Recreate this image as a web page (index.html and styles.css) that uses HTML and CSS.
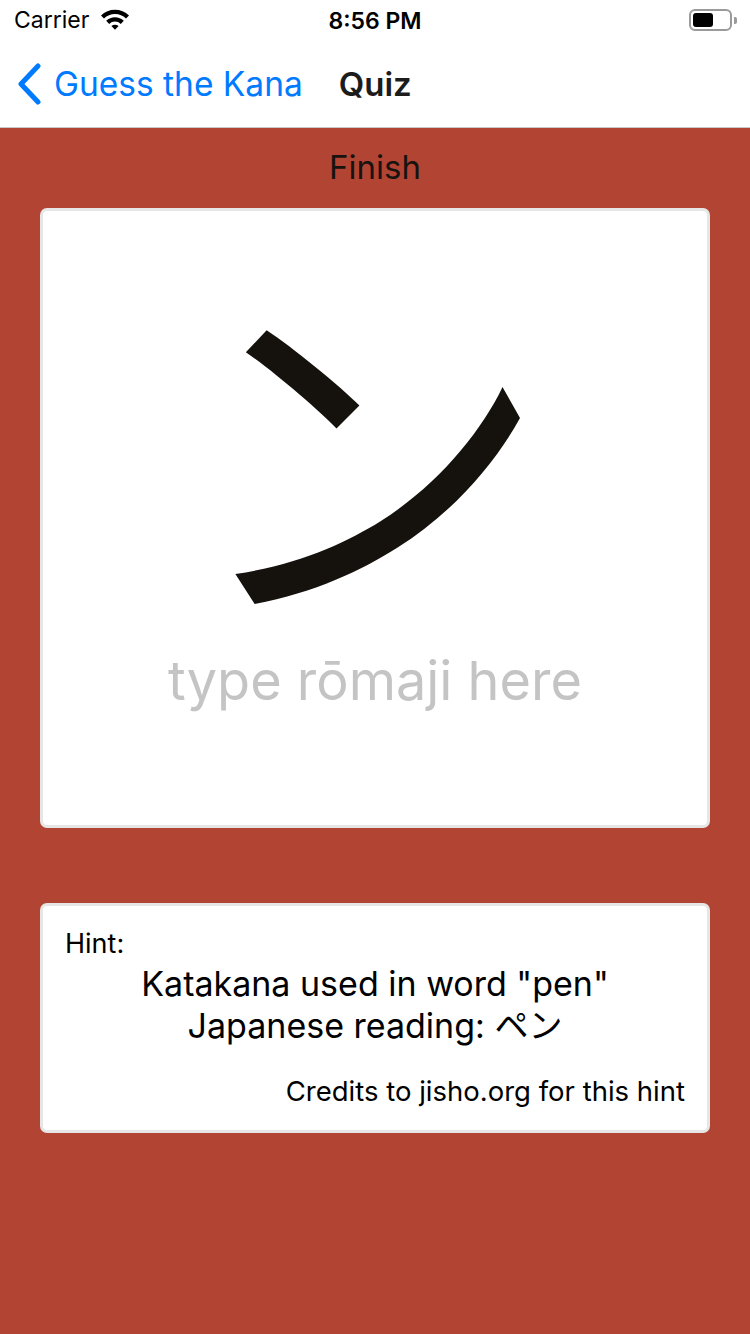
FILE: index.html
```html
<!DOCTYPE html>
<html>
<head>
<meta charset="utf-8">
<link rel="stylesheet" href="styles.css">
</head>
<body>
<div class="statusbar">
  <div class="sb-left">
    <span class="carrier">Carrier</span>
    <svg class="wifi" width="30" height="22" viewBox="0 0 30 22">
      <path d="M1 7.5 A20 20 0 0 1 29 7.5 L26 10.6 A15.6 15.6 0 0 0 4 10.6 Z" fill="#000"/>
      <path d="M6.2 12.8 A12.6 12.6 0 0 1 23.8 12.8 L20.8 15.9 A8.3 8.3 0 0 0 9.2 15.9 Z" fill="#000"/>
      <path d="M11.4 18.1 A5.2 5.2 0 0 1 18.6 18.1 L15 21.8 Z" fill="#000"/>
    </svg>
  </div>
  <div class="time">8:56 PM</div>
  <div class="sb-right">
    <div class="battery"><div class="battery-fill"></div></div>
    <div class="battery-nub"></div>
  </div>
</div>
<div class="navbar">
  <div class="back">
    <svg class="chevron" width="26" height="42" viewBox="0 0 26 42">
      <path d="M22 3 L5 21 L22 39" fill="none" stroke="#007aff" stroke-width="5" stroke-linecap="round" stroke-linejoin="round"/>
    </svg>
    <span class="back-text">Guess the Kana</span>
  </div>
  <div class="title">Quiz</div>
</div>
<main class="content">
  <div class="finish">Finish</div>
  <section class="card kana-card">
    <div class="kana">ン</div>
    <div class="placeholder">type rōmaji here</div>
  </section>
  <section class="card hint-card">
    <div class="hint-label">Hint:</div>
    <div class="hint-text">Katakana used in word "pen"<br>Japanese reading: ペン</div>
    <div class="credits">Credits to jisho.org for this hint</div>
  </section>
</main>
</body>
</html>
```
FILE: styles.css
```css
html, body {
  margin: 0;
  padding: 0;
}
body {
  width: 750px;
  height: 1334px;
  overflow: hidden;
  font-family: Inter, "Noto Sans CJK JP", sans-serif;
  background: #b24434;
}
.statusbar {
  height: 40px;
  background: #fff;
  display: flex;
  align-items: center;
  justify-content: space-between;
  padding: 0 13px 0 14px;
  position: relative;
}
.sb-left {
  display: flex;
  align-items: center;
  gap: 11px;
  width: 200px;
}
.carrier {
  font-size: 23px;
  color: #000;
}
.wifi {
  margin-top: -2px;
}
.time {
  font-size: 23px;
  font-weight: 600;
  color: #000;
  position: absolute;
  left: 0;
  right: 0;
  text-align: center;
  top: 7px;
}
.sb-right {
  display: flex;
  align-items: center;
  gap: 2px;
}
.battery {
  border: 2px solid #9a9a9a;
  border-radius: 6px;
  padding: 2px;
  box-sizing: content-box;
  display: flex;
  width: 35px;
  height: 14px;
}
.battery-fill {
  width: 20px;
  height: 14px;
  background: #000;
  border-radius: 3px;
}
.battery-nub {
  width: 3px;
  height: 7px;
  background: #9a9a9a;
  border-radius: 0 2px 2px 0;
}
.navbar {
  height: 88px;
  background: #fff;
  border-bottom: 1px solid #c8c8c8;
  display: flex;
  align-items: center;
  padding-left: 16px;
  box-sizing: border-box;
}
.back {
  display: flex;
  align-items: center;
  gap: 12px;
}
.back-text {
  font-size: 33.5px;
  color: #007aff;
}
.title {
  margin-left: 36px;
  font-size: 33px;
  font-weight: 600;
  color: #1c1c1c;
}
.content {
  padding: 0 40px;
  display: flex;
  flex-direction: column;
}
.finish {
  text-align: center;
  font-size: 33px;
  color: #161310;
  padding: 19px 0 21px;
  line-height: 40px;
}
.card {
  background: #fff;
  border: 3px solid #e6e6e6;
  border-radius: 7px;
  box-sizing: border-box;
}
.kana-card {
  height: 620px;
  display: flex;
  flex-direction: column;
  align-items: center;
}
.kana {
  font-family: "Noto Sans CJK JP", sans-serif;
  font-size: 364px;
  line-height: 1;
  color: #15110d;
  margin-top: 46px;
  height: 364px;
  margin-right: 18px;
}
.placeholder {
  font-size: 54px;
  line-height: 64px;
  color: #c4c4c4;
  margin-top: 28px;
}
.hint-card {
  margin-top: 75px;
  height: 230px;
  padding: 22px 22px 0 22px;
  display: flex;
  flex-direction: column;
}
.hint-label {
  font-size: 27px;
  line-height: 32px;
  color: #000;
}
.hint-text {
  font-size: 34px;
  text-align: center;
  color: #000;
  line-height: 42px;
  margin-top: 3px;
}
.credits {
  font-size: 27.5px;
  line-height: 34px;
  text-align: right;
  color: #000;
  margin-top: 27px;
}
```
